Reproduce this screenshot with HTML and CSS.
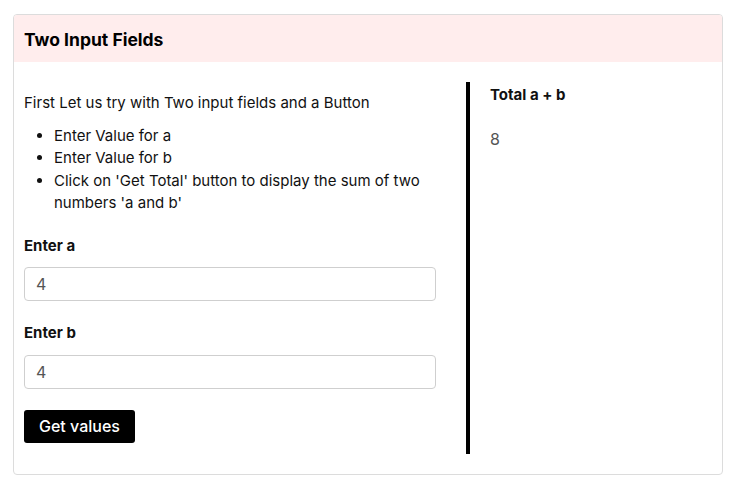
FILE: index.html
```html
<!DOCTYPE html>
<html>
<head>
<meta charset="utf-8">
<link rel="stylesheet" href="styles.css">
</head>
<body>
<div class="card">
  <div class="card-header">Two Input Fields</div>
  <div class="card-body">
    <div class="left">
      <p class="intro">First Let us try with Two input fields and a Button</p>
      <ul class="steps">
        <li>Enter Value for a</li>
        <li>Enter Value for b</li>
        <li>Click on 'Get Total' button to display the sum of two numbers 'a and b'</li>
      </ul>
      <label class="label">Enter a</label>
      <input class="field" type="text" value="4">
      <label class="label">Enter b</label>
      <input class="field" type="text" value="4">
      <button class="btn">Get values</button>
    </div>
    <div class="right">
      <div class="total-title">Total a + b</div>
      <div class="total-value">8</div>
    </div>
  </div>
</div>
</body>
</html>
```

FILE: styles.css
```css
* { box-sizing: border-box; }
body {
  margin: 0;
  padding: 14px 20px 0 13px;
  font-family: Inter, "Noto Sans", sans-serif;
  font-size: 15px;
  line-height: 1.5;
  color: #111;
  background: #fff;
}
.card {
  width: 710px;
  height: 461px;
  border: 1px solid #dcdcdc;
  border-radius: 4px;
  overflow: hidden;
}
.card-header {
  height: 47px;
  background: #ffeded;
  padding: 0 10px;
  font-size: 17.5px;
  font-weight: 700;
  line-height: 49px;
  color: #000;
}
.card-body {
  display: flex;
  padding: 20px 10px;
  height: 412px;
}
.left {
  width: 412px;
  display: flex;
  flex-direction: column;
  align-items: flex-start;
}
.intro { margin: 10px 0 0; }
.steps {
  margin: 10px 0 0;
  padding-left: 30px;
}
.label {
  display: block;
  font-weight: 700;
  margin-top: 20px;
  color: #111;
}
.field + .label { margin-top: 21px; }
.field {
  width: 412px;
  height: 34px;
  margin-top: 10px;
  border: 1px solid #cfcfcf;
  border-radius: 4px;
  padding: 0 11px;
  font-family: Inter, "Noto Sans", sans-serif;
  font-size: 16px;
  color: #555;
  background: #fff;
}
.btn {
  margin-top: 21px;
  height: 33px;
  padding: 0 15px;
  background: #000;
  color: #fff;
  border: none;
  border-radius: 3px;
  font-family: Inter, "Noto Sans", sans-serif;
  font-size: 16px;
  font-weight: 500;
}
.right {
  margin-left: 30px;
  border-left: 4px solid #000;
  padding-left: 20px;
  flex: 1;
}
.total-title {
  margin-top: 2px;
  font-weight: 700;
}
.total-value {
  margin-top: 20px;
  color: #555;
  font-size: 16px;
}
```
